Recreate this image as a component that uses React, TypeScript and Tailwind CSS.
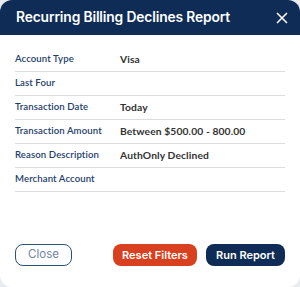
import { X } from "lucide-react";

const ROWS = [
  { label: "Account Type", value: "Visa" },
  { label: "Last Four", value: "" },
  { label: "Transaction Date", value: "Today" },
  { label: "Transaction Amount", value: "Between $500.00 - 800.00" },
  { label: "Reason Description", value: "AuthOnly Declined" },
  { label: "Merchant Account", value: "" },
];

export default function App() {
  return (
    <div className="h-[287px] w-[300px] bg-[#e9ebee]" style={{ fontFamily: "Inter, sans-serif" }}>
      <div className="flex h-full w-full flex-col overflow-hidden rounded-xl bg-white">
        <header className="flex h-[35px] items-center justify-between bg-[#0e2c55] pl-4 pr-[9px]">
          <h1 className="text-[13.8px] font-semibold tracking-[-0.01em] text-white">
            Recurring Billing Declines Report
          </h1>
          <X className="h-[18px] w-[18px] text-white" strokeWidth={2.2} />
        </header>
        <div className="mx-[15px] mt-[13px]" style={{ fontFamily: "Lato, sans-serif" }}>
          {ROWS.map((row) => (
            <div
              key={row.label}
              className="grid h-[24px] grid-cols-[105px_1fr] items-center border-b border-[#dcdcdc]"
            >
              <span className="text-[9.6px] font-semibold tracking-[0.01em] text-[#23406b]">{row.label}</span>
              <span className="text-[10.3px] font-bold tracking-[0.01em] text-[#333333]">{row.value}</span>
            </div>
          ))}
        </div>
        <div className="mx-[15px] mt-[52px] flex items-center">
          <button className="h-[22px] w-[57px] rounded-lg border-[1.5px] border-[#2d5179] text-[11.5px] text-[#6f84a0]">
            Close
          </button>
          <button className="ml-auto h-[22px] w-[84px] rounded-lg bg-[#d8401f] text-[11px] font-semibold text-white">
            Reset Filters
          </button>
          <button className="ml-[9px] h-[22px] w-[79px] rounded-lg bg-[#0e2c55] text-[11px] font-semibold text-white">
            Run Report
          </button>
        </div>
      </div>
    </div>
  );
}
